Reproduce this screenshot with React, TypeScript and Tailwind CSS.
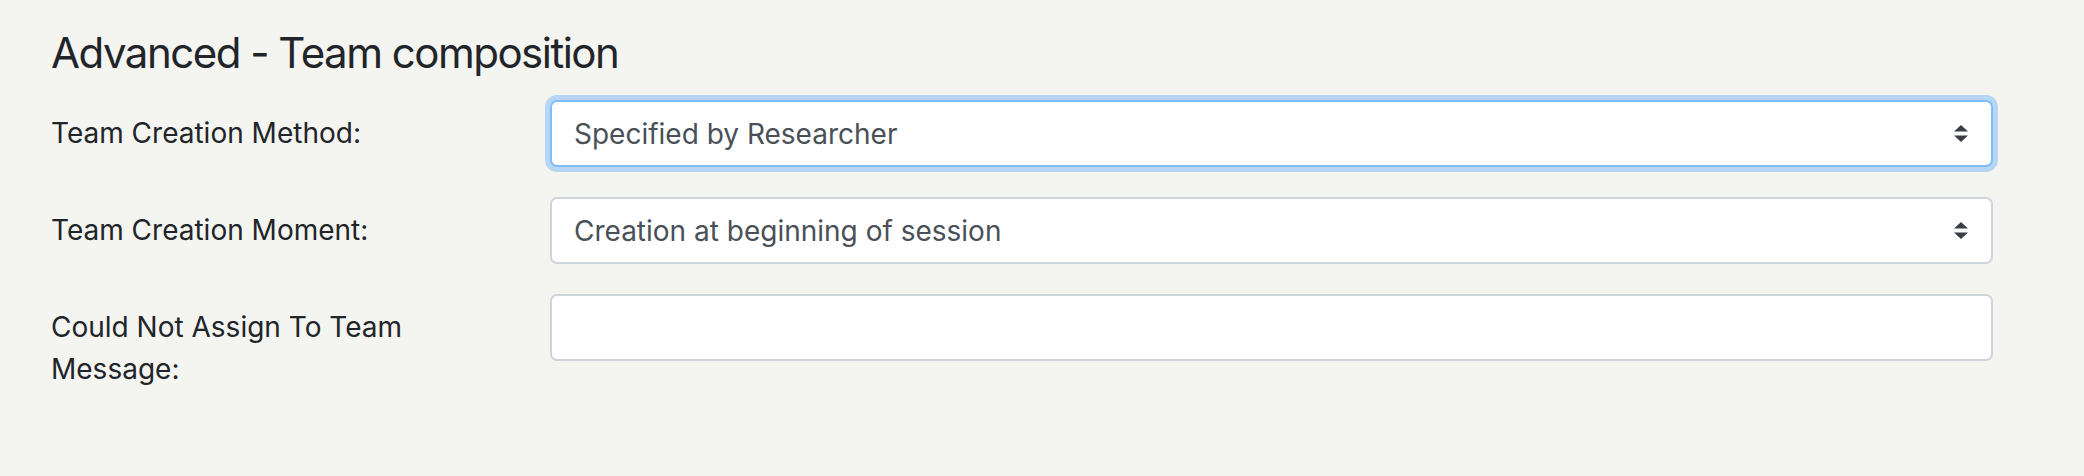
import React from 'react';

const SelectArrows = () => (
  <svg width="14" height="17" viewBox="0 0 14 17" className="shrink-0">
    <path d="M0 6.5 L7 0 L14 6.5 Z" fill="#3a3e44" />
    <path d="M0 10.5 L14 10.5 L7 17 Z" fill="#3a3e44" />
  </svg>
);

interface FieldProps {
  label: React.ReactNode;
  children: React.ReactNode;
}

const Field: React.FC<FieldProps> = ({ label, children }) => (
  <div className="flex items-start mb-[30px]">
    <label className="w-[513px] shrink-0 pl-[14px] pr-[14px] pt-[12px] pb-[12px] text-[28px] leading-[42px] text-[#212529]">
      {label}
    </label>
    <div className="w-[1443px] shrink-0">{children}</div>
  </div>
);

const FakeSelect = ({ value, focused = false }: { value: string; focused?: boolean }) => (
  <div
    className={`h-[67px] w-full flex items-center justify-between pl-[22px] pr-[23px] bg-white rounded-[7px] border-2 text-[28px] text-[#495057] ${
      focused
        ? 'border-[#80bdff] shadow-[0_0_0_5px_rgba(0,123,255,0.25)]'
        : 'border-[#cfd3da]'
    }`}
  >
    <span>{value}</span>
    <SelectArrows />
  </div>
);

export default function App() {
  return (
    <div
      className="min-h-screen w-full bg-[#f4f4f0] pl-[37px] pt-[28px]"
      style={{ fontFamily: 'Inter, "Noto Sans", sans-serif' }}
    >
      <h4 className="pl-[14px] text-[42px] leading-[50px] font-normal tracking-[-1.5px] text-[#212529] mb-[22px]">
        Advanced - Team composition
      </h4>

      <Field label="Team Creation Method:">
        <FakeSelect value="Specified by Researcher" focused />
      </Field>

      <Field label="Team Creation Moment:">
        <FakeSelect value="Creation at beginning of session" />
      </Field>

      <Field
        label={
          <>
            Could Not Assign To Team
            <br />
            Message:
          </>
        }
      >
        <input
          type="text"
          className="h-[67px] w-full px-[22px] bg-white rounded-[7px] border-2 border-[#cfd3da] text-[28px] text-[#495057] outline-none"
        />
      </Field>
    </div>
  );
}
